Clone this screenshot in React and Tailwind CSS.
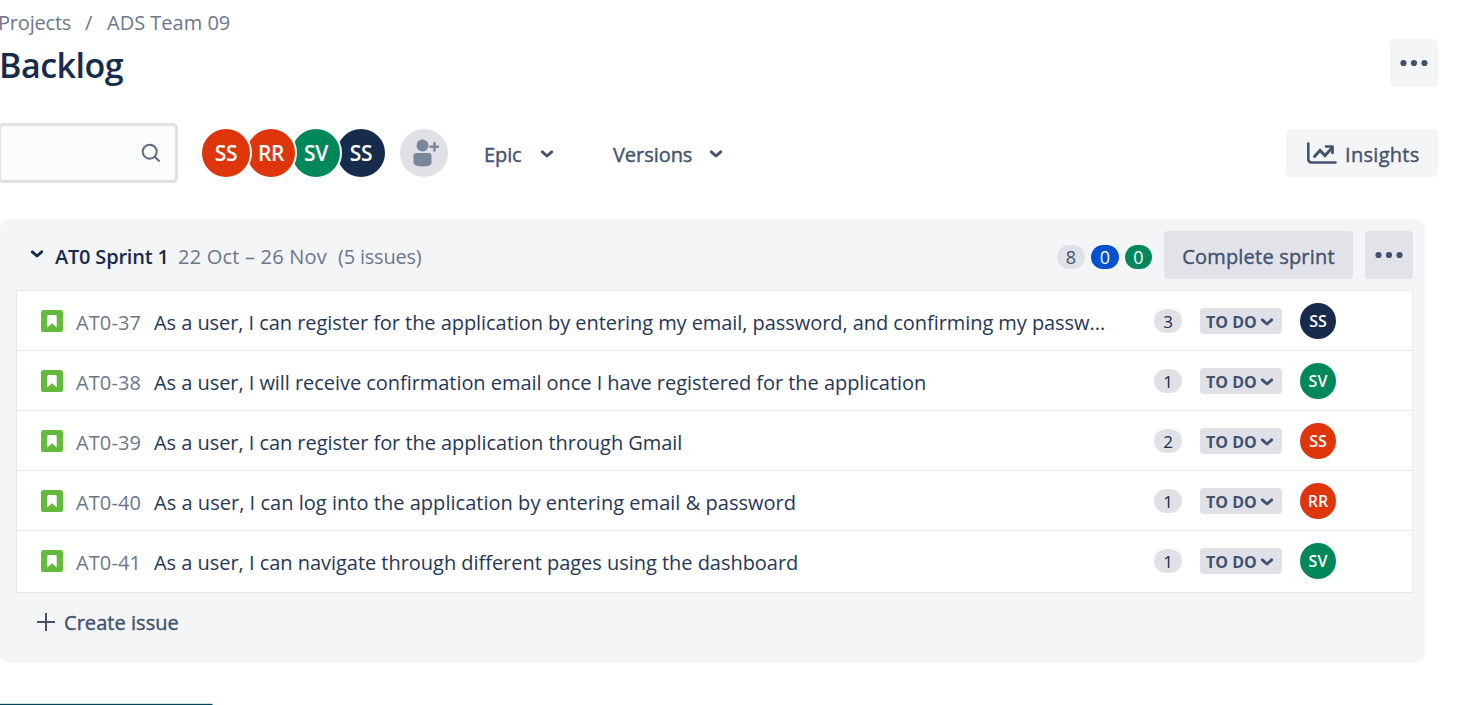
const ISSUES = [
  { id: 37, title: 'As a user, I can register for the application by entering my email, password, and confirming my passw...', spacing: 'tracking-[-0.06px]', points: 3, who: 'SS', color: 'bg-[#172b4d]' },
  { id: 38, title: 'As a user, I will receive confirmation email once I have registered for the application', spacing: 'tracking-[-0.05px]', points: 1, who: 'SV', color: 'bg-[#00875a]' },
  { id: 39, title: 'As a user, I can register for the application through Gmail', spacing: 'tracking-[-0.05px]', points: 2, who: 'SS', color: 'bg-[#de350b]' },
  { id: 40, title: 'As a user, I can log into the application by entering email & password', spacing: 'tracking-[0.03px]', points: 1, who: 'RR', color: 'bg-[#de350b]' },
  { id: 41, title: 'As a user, I can navigate through different pages using the dashboard', spacing: 'tracking-[-0.03px]', points: 1, who: 'SV', color: 'bg-[#00875a]' },
];

const MEMBERS = [
  { name: 'SS', color: 'bg-[#de350b]' },
  { name: 'RR', color: 'bg-[#de350b]' },
  { name: 'SV', color: 'bg-[#00875a]' },
  { name: 'SS', color: 'bg-[#172b4d]' },
];

function Chevron({ className = '' }) {
  return (
    <svg className={`h-[8px] w-[14px] shrink-0 ${className}`} viewBox="0 0 14 8" fill="none" stroke="currentColor" strokeWidth="2.9" strokeLinecap="round" strokeLinejoin="round">
      <path d="M2.3 1.8 7 6l4.7-4.200" />
    </svg>
  );
}

function Dots() {
  return (
    <svg className="h-[8px] w-[30px]" viewBox="0 0 30 8" fill="currentColor">
      <circle cx="4.5" cy="4" r="3.1" />
      <circle cx="15" cy="4" r="3.1" />
      <circle cx="25.5" cy="4" r="3.1" />
    </svg>
  );
}

function StoryIcon() {
  return (
    <svg className="h-[22px] w-[22px] shrink-0" viewBox="0 0 22 22">
      <rect width="22" height="22" rx="2.6" fill="#63ba3c" />
      <path d="M6.300 6.300c0-.8.5-1.300 1.300-1.300h6.800c.8 0 1.300.5 1.300 1.300V17.500L11 13.300 6.300 17.500Z" fill="#fff" />
    </svg>
  );
}

function IssueRow({ issue }) {
  return (
    <li className="flex h-[60px] items-center border-b border-[#e6e8eb] pl-6 last:border-b-0">
      <StoryIcon />
      <span className="ml-[13px] mt-1 w-[78px] shrink-0 whitespace-nowrap text-[20px] tracking-[0.1px] text-[#6b778c]">AT0-{issue.id}</span>
      <span className={`mt-1 w-[1000px] shrink-0 whitespace-nowrap text-[20px] text-[#253858] ${issue.spacing}`}>{issue.title}</span>
      <span className="flex h-6 w-7 shrink-0 items-center justify-center rounded-full bg-[#dfe1e6] pt-[2px] text-[17px] text-[#172b4d]">{issue.points}</span>
      <span className="ml-[18px] flex h-[26px] w-[82px] shrink-0 items-center rounded-[4px] bg-[#dfe1e6] pl-[6px] text-[#42526e]">
        <span className="mt-[2px] w-[54px] whitespace-nowrap text-[16px] font-bold">TO DO</span>
        <Chevron className="mt-[2px]" />
      </span>
      <span className={`ml-[18px] flex size-9 shrink-0 items-center justify-center rounded-full text-[16px] font-semibold text-white ${issue.color}`}>{issue.who}</span>
    </li>
  );
}

export default function App() {
  return (
    <div className="flex h-[705px] w-full flex-col overflow-hidden bg-white font-['Open_Sans','Noto_Sans',sans-serif]">
      <nav className="flex h-[39px] shrink-0 items-center pt-[6px] text-[20px] leading-none text-[#6b778c]">
        <span className="-ml-[2px] w-[87px] whitespace-nowrap tracking-[-0.2px]">Projects</span>
        <span className="w-[22px]">/</span>
        <span className="whitespace-nowrap">ADS Team 09</span>
      </nav>

      <header className="flex h-[48px] shrink-0 items-center justify-between pr-[27px]">
        <h1 className="-ml-[1px] mt-[4px] whitespace-nowrap text-[34px] font-semibold leading-none tracking-[-0.5px] text-[#172b4d]">Backlog</h1>
        <button className="flex size-12 items-center justify-center rounded-[4px] bg-[#f4f5f7] text-[#42526e]"><Dots /></button>
      </header>

      <div className="mt-[36px] flex h-[60px] shrink-0 items-center pr-[27px] text-[#42526e]">
        <div className="-ml-[2px] flex h-[60px] w-[180px] items-center justify-end rounded-[5px] border-[3px] border-[#dfe1e6] bg-[#fafbfc] pr-[14px]">
          <svg className="h-5 w-5" viewBox="0 0 20 20" fill="none" stroke="#5e6c84" strokeWidth="2" strokeLinecap="round">
            <circle cx="8.700" cy="8.700" r="7" />
            <path d="m14 14 4 4" />
          </svg>
        </div>
        <div className="ml-[22px] flex w-[200px] items-center">
          {MEMBERS.map((m, i) => (
            <span key={i} className={`relative -mr-[7px] flex size-[52px] shrink-0 items-center justify-center rounded-full border-2 border-white pt-px text-[21px] font-semibold tracking-[-0.3px] text-white ${m.color} ${['z-40', 'z-30', 'z-20', 'z-10'][i]}`}>{m.name}</span>
          ))}
        </div>
        <button className="flex size-12 shrink-0 items-center justify-center rounded-full bg-[#dfe1e6]">
          <svg className="size-12" viewBox="0 0 48 48" fill="#7a869a">
            <circle cx="22.500" cy="16.500" r="6" />
            <path d="M13.500 27a3 3 0 0 1 3-3h12a3 3 0 0 1 3 3v6.500q0 4-9 4t-9-4Z" />
            <path d="M34.500 14v7.500M30.500 17.700h7.500" stroke="#7a869a" strokeWidth="2.500" strokeLinecap="round" />
          </svg>
        </button>
        <button className="ml-9 flex w-[129px] items-center text-left text-[20px] tracking-[-0.1px] [-webkit-text-stroke:0.4px]">
          <span className="mt-[3px] w-[56px] whitespace-nowrap">Epic</span>
          <Chevron className="mt-[1px]" />
        </button>
        <button className="flex w-[120px] items-center text-left text-[20px] tracking-[-0.05px] [-webkit-text-stroke:0.4px]">
          <span className="mt-[3px] w-[96px] whitespace-nowrap">Versions</span>
          <Chevron className="mt-[1px]" />
        </button>
        <button className="ml-auto flex h-12 w-[152px] items-center rounded-[4px] bg-[#f4f5f7] pl-[20px] text-[20px] tracking-[0.3px] [-webkit-text-stroke:0.4px]">
          <svg className="h-[24px] w-[32px] shrink-0" viewBox="0 0 32 24" fill="none" stroke="currentColor" strokeWidth="2.600" strokeLinecap="round" strokeLinejoin="round">
            <path d="M2.300 2.500V18q0 3.500 3.500 3.500H29.500" />
            <path d="M8.500 15.500 14 9.500l5 5 7-7.500" strokeWidth="3" strokeLinejoin="miter" />
            <path d="M20 5.500h6.500V12" strokeWidth="2.700" />
          </svg>
          <span className="ml-[7px] mt-[3px] whitespace-nowrap">Insights</span>
        </button>
      </div>

      <section className="mt-9 h-[444px] w-[1425px] shrink-0 rounded-[10px] bg-[#f4f5f7] pl-4 pr-3 pt-3">
        <div className="flex h-12 items-center">
          <Chevron className="ml-[14px] -mt-[3px] text-[#172b4d]" />
          <span className="ml-[11px] mt-[3px] w-[123px] shrink-0 whitespace-nowrap text-[20px] font-semibold tracking-[-0.2px] text-[#172b4d]">AT0 Sprint 1</span>
          <span className="mt-[3px] w-[160px] shrink-0 whitespace-nowrap text-[20px] tracking-[0.2px] text-[#6b778c]">22 Oct – 26 Nov</span>
          <span className="mt-[3px] whitespace-nowrap text-[20px] tracking-[-0.2px] text-[#6b778c]">(5 issues)</span>
          <div className="ml-auto mt-1 flex gap-[6px] text-[18px]">
            <span className="flex h-6 w-7 items-center justify-center rounded-full bg-[#dfe1e6] text-[#42526e]">8</span>
            <span className="flex h-6 w-7 items-center justify-center rounded-full bg-[#0052cc] text-white">0</span>
            <span className="flex h-6 w-[27px] items-center justify-center rounded-full bg-[#00875a] text-white">0</span>
          </div>
          <button className="ml-3 flex h-12 w-[189px] items-center justify-center rounded-[4px] bg-[#e1e3e9] pt-[3px] text-[20px] tracking-[0.2px] text-[#42526e] [-webkit-text-stroke:0.4px]">
            <span className="whitespace-nowrap">Complete sprint</span>
          </button>
          <button className="ml-3 flex size-12 items-center justify-center rounded-[4px] bg-[#e1e3e9] text-[#42526e]"><Dots /></button>
        </div>
        <ul className="mt-[11px] h-[303px] w-[1397px] border border-[#e6e8eb] bg-white">
          {ISSUES.map((issue) => <IssueRow key={issue.id} issue={issue} />)}
        </ul>
        <button className="flex h-[57px] items-center pl-[21px] text-[#42526e]">
          <svg className="size-[18px]" viewBox="0 0 18 18" stroke="currentColor" strokeWidth="2"><path d="M9 0v18M0 9h18" /></svg>
          <span className="ml-[9px] mt-[3px] whitespace-nowrap text-[20px] tracking-[0.05px] [-webkit-text-stroke:0.4px]">Create issue</span>
        </button>
      </section>
      <div className="mt-[40px] h-[2px] w-[213px] shrink-0 rounded-tr-[3px] border-t border-[#cfe3ec] bg-[#064355]" />
    </div>
  );
}
